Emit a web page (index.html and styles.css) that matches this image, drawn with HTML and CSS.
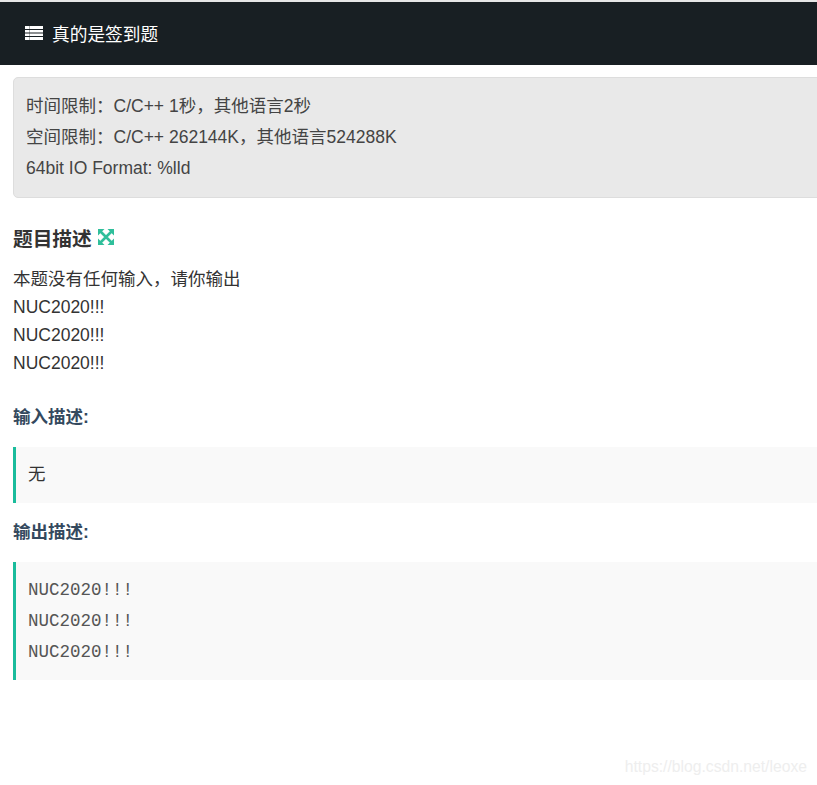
FILE: index.html
```html
<!DOCTYPE html>
<html lang="zh">
<head>
    <meta charset="UTF-8">
    <meta name="viewport" content="width=device-width, initial-scale=1.0">
    <title>真的是签到题</title>
    <link rel="stylesheet" href="styles.css">
</head>
<body>
    <div class="top-strip"></div>
    <header class="title-bar">
        <svg class="list-icon" width="18" height="14" viewBox="0 0 18 14">
            <path fill="#fff" d="M0 0h18v3H0zM0 4h18v2.500H0zM0 7.500h18V10H0zM0 11h18v3H0z"/>
            <path fill="#181f23" opacity="0.35" d="M4 0h1v14H4z"/>
        </svg>
        <span>真的是签到题</span>
    </header>

    <main class="content">
        <div class="limits">
            <div>时间限制：C/C++ 1秒，其他语言2秒</div>
            <div>空间限制：C/C++ 262144K，其他语言524288K</div>
            <div>64bit IO Format: %lld</div>
        </div>

        <h2 class="section-title">
            题目描述
            <svg class="expand-icon" width="16" height="16" viewBox="0 0 16 16">
                <path fill="#2fbf9b" d="M0 0h6.500L0 6.500zM16 0v6.500L9.500 0zM0 16v-6.500L6.500 16zM16 16H9.500L16 9.500z"/>
                <path stroke="#2fbf9b" stroke-width="2.600" d="M2 2l12 12M14 2L2 14"/>
            </svg>
        </h2>
        <div class="desc">
            <div>本题没有任何输入，请你输出</div>
            <div>NUC2020!!!</div>
            <div>NUC2020!!!</div>
            <div>NUC2020!!!</div>
        </div>

        <h3 class="sub-title first">输入描述:</h3>
        <div class="quote">无</div>

        <h3 class="sub-title">输出描述:</h3>
        <div class="quote mono">
            <div>NUC2020!!!</div>
            <div>NUC2020!!!</div>
            <div>NUC2020!!!</div>
        </div>
    </main>

    <div class="watermark">https://blog.csdn.net/leoxe</div>
</body>
</html>
```

FILE: styles.css
```css
html, body {
    margin: 0;
    padding: 0;
}
body {
    width: 817px;
    height: 785px;
    overflow: hidden;
    position: relative;
    background: #fff;
    color: #333;
    font-family: "Liberation Sans", "Noto Sans CJK SC", sans-serif;
    font-size: 17.5px;
}
.top-strip {
    height: 2px;
    background: #e6e6e6;
}
.title-bar {
    box-sizing: border-box;
    height: 63px;
    background: #181f23;
    color: #fff;
    display: flex;
    align-items: center;
    padding: 0 0 2px 25px;
    gap: 9px;
    font-size: 17.7px;
}
.list-icon {
    flex: none;
}
.content {
    padding: 12px 0 0 13px;
}
.limits {
    box-sizing: border-box;
    width: 830px;
    height: 121px;
    padding: 13px 12px;
    background: #e9e9e9;
    border: 1px solid #ddd;
    border-radius: 5px;
    line-height: 31px;
    color: #444;
}
.section-title {
    display: flex;
    align-items: center;
    gap: 6px;
    margin: 25px 0 0;
    height: 28px;
    font-size: 19.7px;
    font-weight: bold;
}
.desc {
    margin-top: 14px;
    line-height: 28px;
}
.sub-title {
    margin: 16px 0 0;
    height: 26px;
    line-height: 26px;
    font-size: 17.5px;
    font-weight: bold;
    color: #34495e;
}
.sub-title.first {
    margin-top: 27px;
}
.quote {
    box-sizing: border-box;
    width: 830px;
    height: 56px;
    margin-top: 17px;
    padding: 0 12px;
    background: #f9f9f9;
    border-left: 3px solid #1abc9c;
    line-height: 54px;
}
.quote.mono {
    height: 118px;
    padding-top: 13px;
    font-family: "Liberation Mono", monospace;
    line-height: 31px;
    color: #555;
}
.watermark {
    position: absolute;
    right: 10px;
    top: 758px;
    font-size: 15.7px;
    color: #eeeeee;
}
```
